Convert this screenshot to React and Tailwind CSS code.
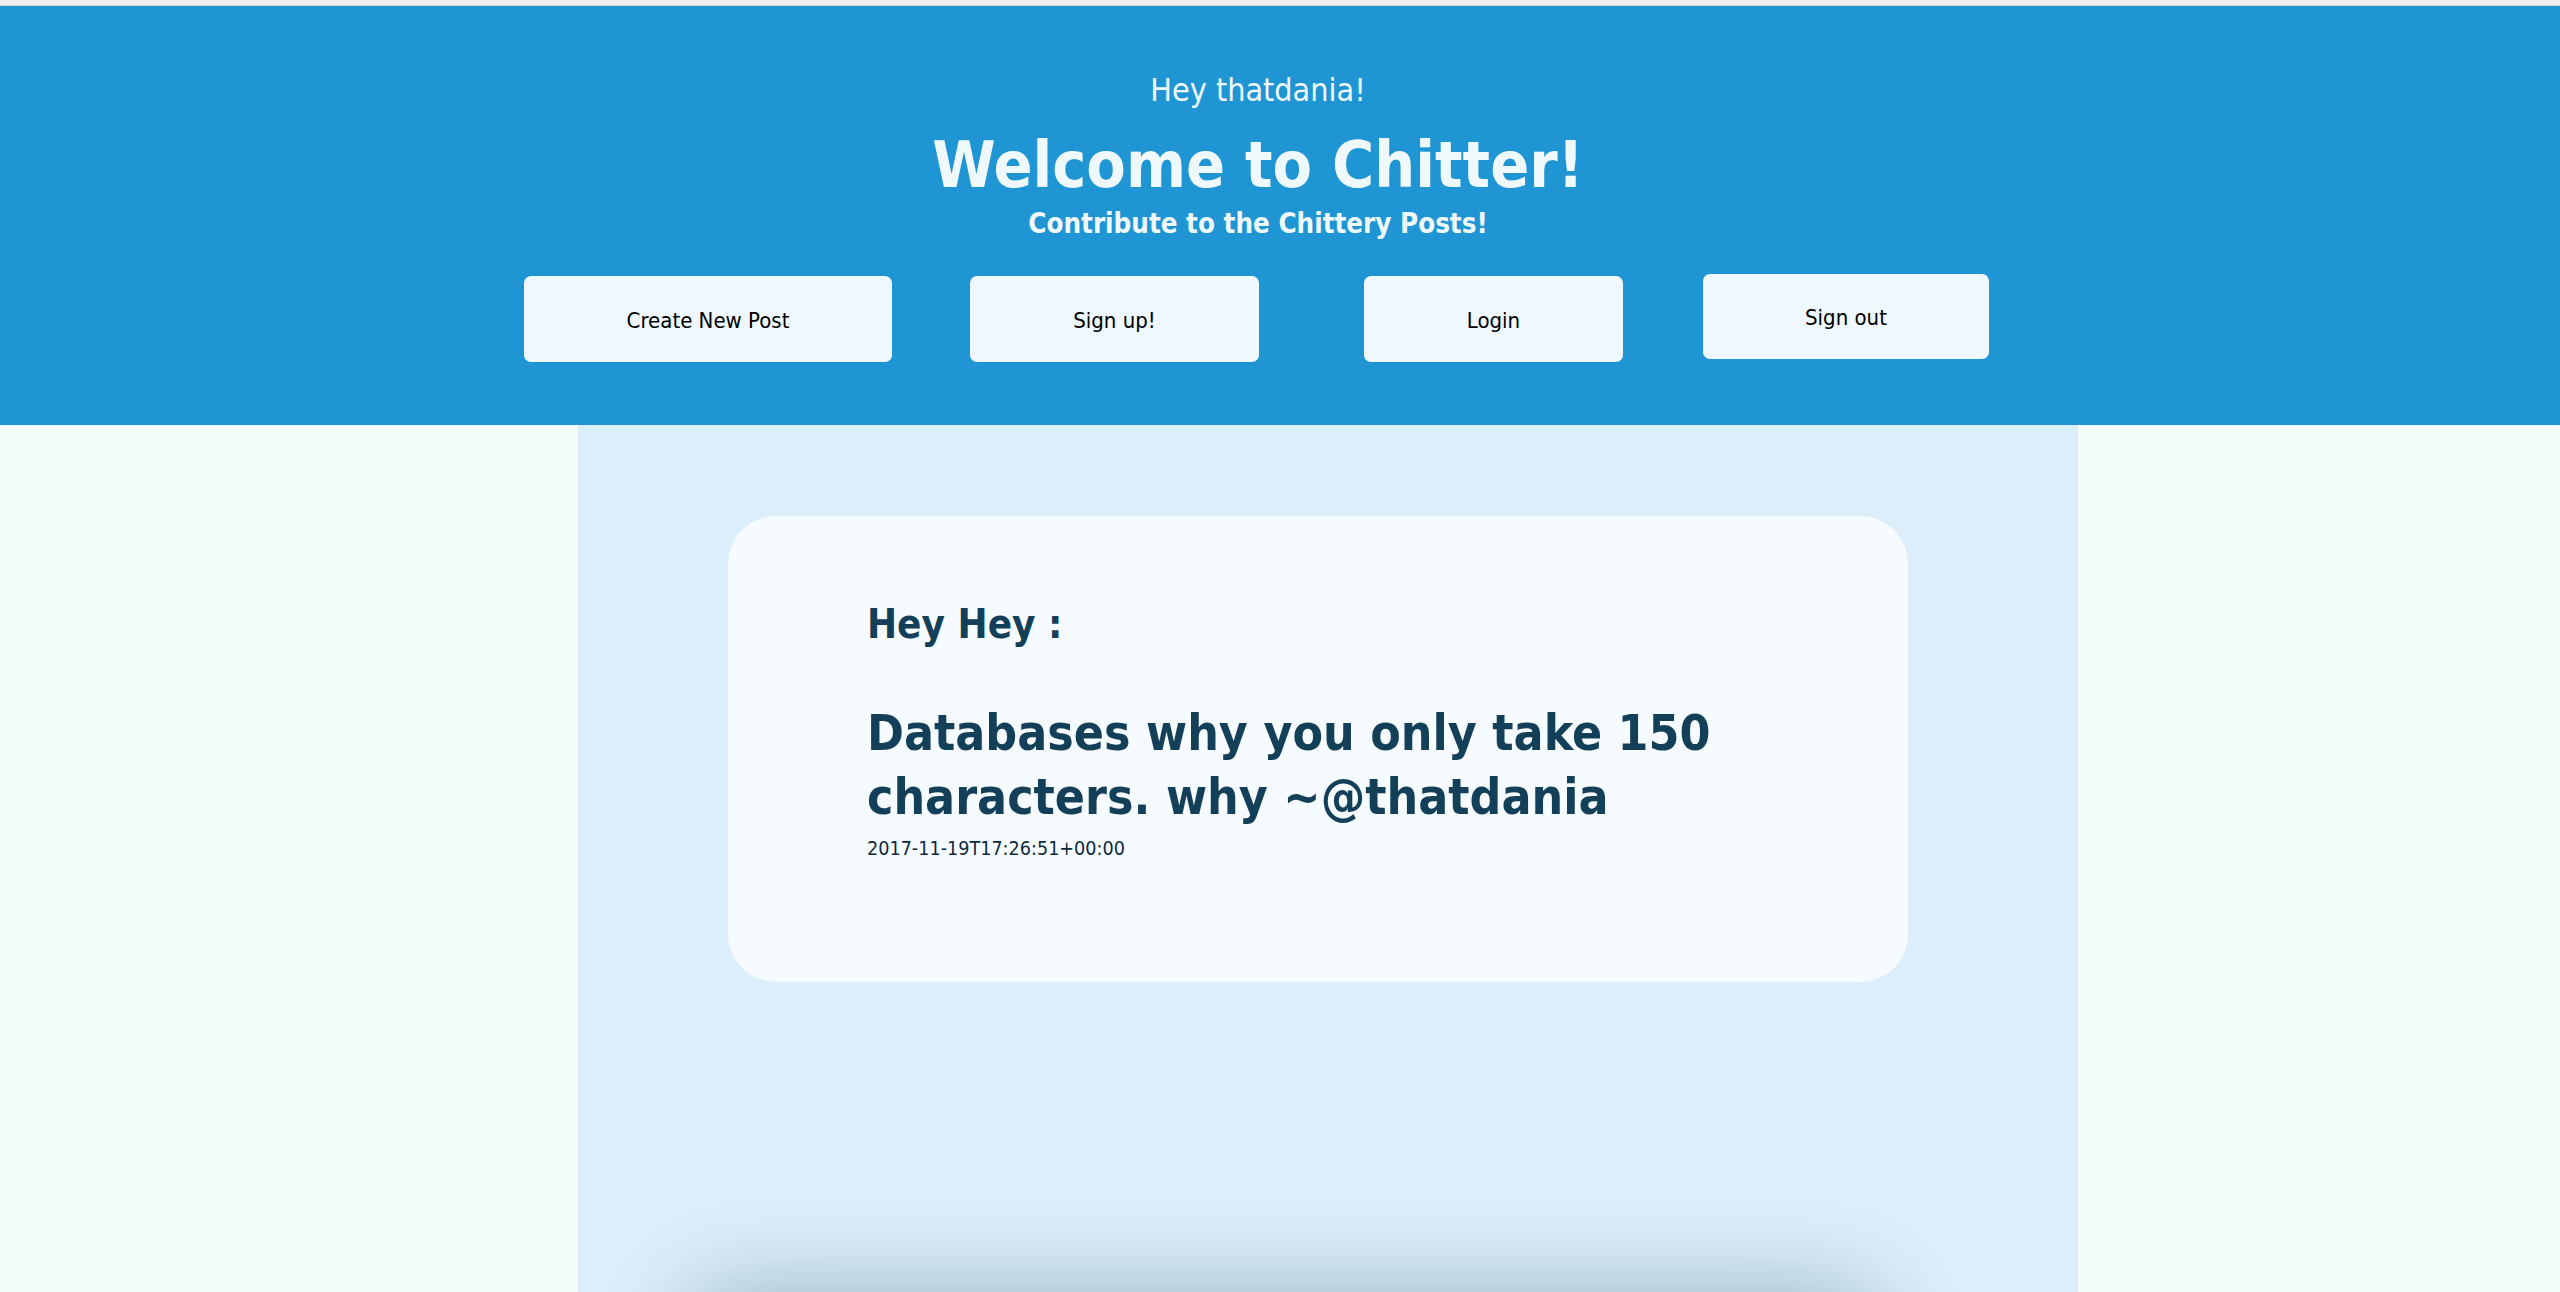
import React from 'react';

const buttons = [
  { label: 'Create New Post', cls: 'ml-[524px] w-[368px] h-[86px]' },
  { label: 'Sign up!', cls: 'ml-[78px] w-[289px] h-[86px]' },
  { label: 'Login', cls: 'ml-[105px] w-[259px] h-[86px]' },
  { label: 'Sign out', cls: 'ml-[80px] w-[286px] h-[85px] -mt-[2px]' },
];

function App() {
  return (
    <div className="w-full h-[1292px] overflow-hidden bg-[#f2fcfb] font-['DejaVu_Sans_Condensed','DejaVu_Sans',sans-serif]">
      {/* top strip */}
      <div className="h-[6px] bg-[#f0f0f0] border-b border-[#d6d6d6]" />

      {/* header */}
      <header className="h-[419px] bg-[#2095d3] text-[#eff9fc] pt-[64px]">
        <div className="pr-[44px] text-center">
          <p className="text-[32px] leading-[40px]">Hey thatdania!</p>
          <h1 className="mt-[19px] text-[64px] leading-[72px] font-bold">Welcome to Chitter!</h1>
          <h3 className="mt-[5px] text-[27.5px] leading-[34px] font-bold">Contribute to the Chittery Posts!</h3>
        </div>

        <div className="flex items-start mt-[36px]">
          {buttons.map(b => (
            <button
              key={b.label}
              className={`${b.cls} bg-[#eef8fe] text-black text-[22px] pt-[2px] rounded-[7px] flex items-center justify-center`}
            >
              {b.label}
            </button>
          ))}
        </div>
      </header>

      {/* posts column */}
      <main className="ml-[578px] w-[1500px] h-[867px] bg-[#dbeef9] pt-[91px]">
        <div className="ml-[150px] w-[1180px] h-[466px] bg-[#f5fbfe] rounded-[48px] pl-[139px] pt-[84px] text-[#143f58]">
          <h2 className="text-[40px] leading-[48px] font-bold">Hey Hey :</h2>
          <h2 className="mt-[53px] max-w-[920px] text-[49.5px] leading-[64px] font-bold">
            Databases why you only take 150 characters. why ~@thatdania
          </h2>
          <p className="mt-[8px] text-[19.6px] leading-[24px] text-[#0f2a40]">2017-11-19T17:26:51+00:00</p>
        </div>

        {/* next post, just below the fold */}
        <div className="mt-[310px] ml-[110px] w-[1190px] h-[400px] bg-[#dbeef9] rounded-[48px] shadow-[0_0_90px_rgba(20,60,90,0.32)]" />
      </main>
    </div>
  );
}

export default App;
